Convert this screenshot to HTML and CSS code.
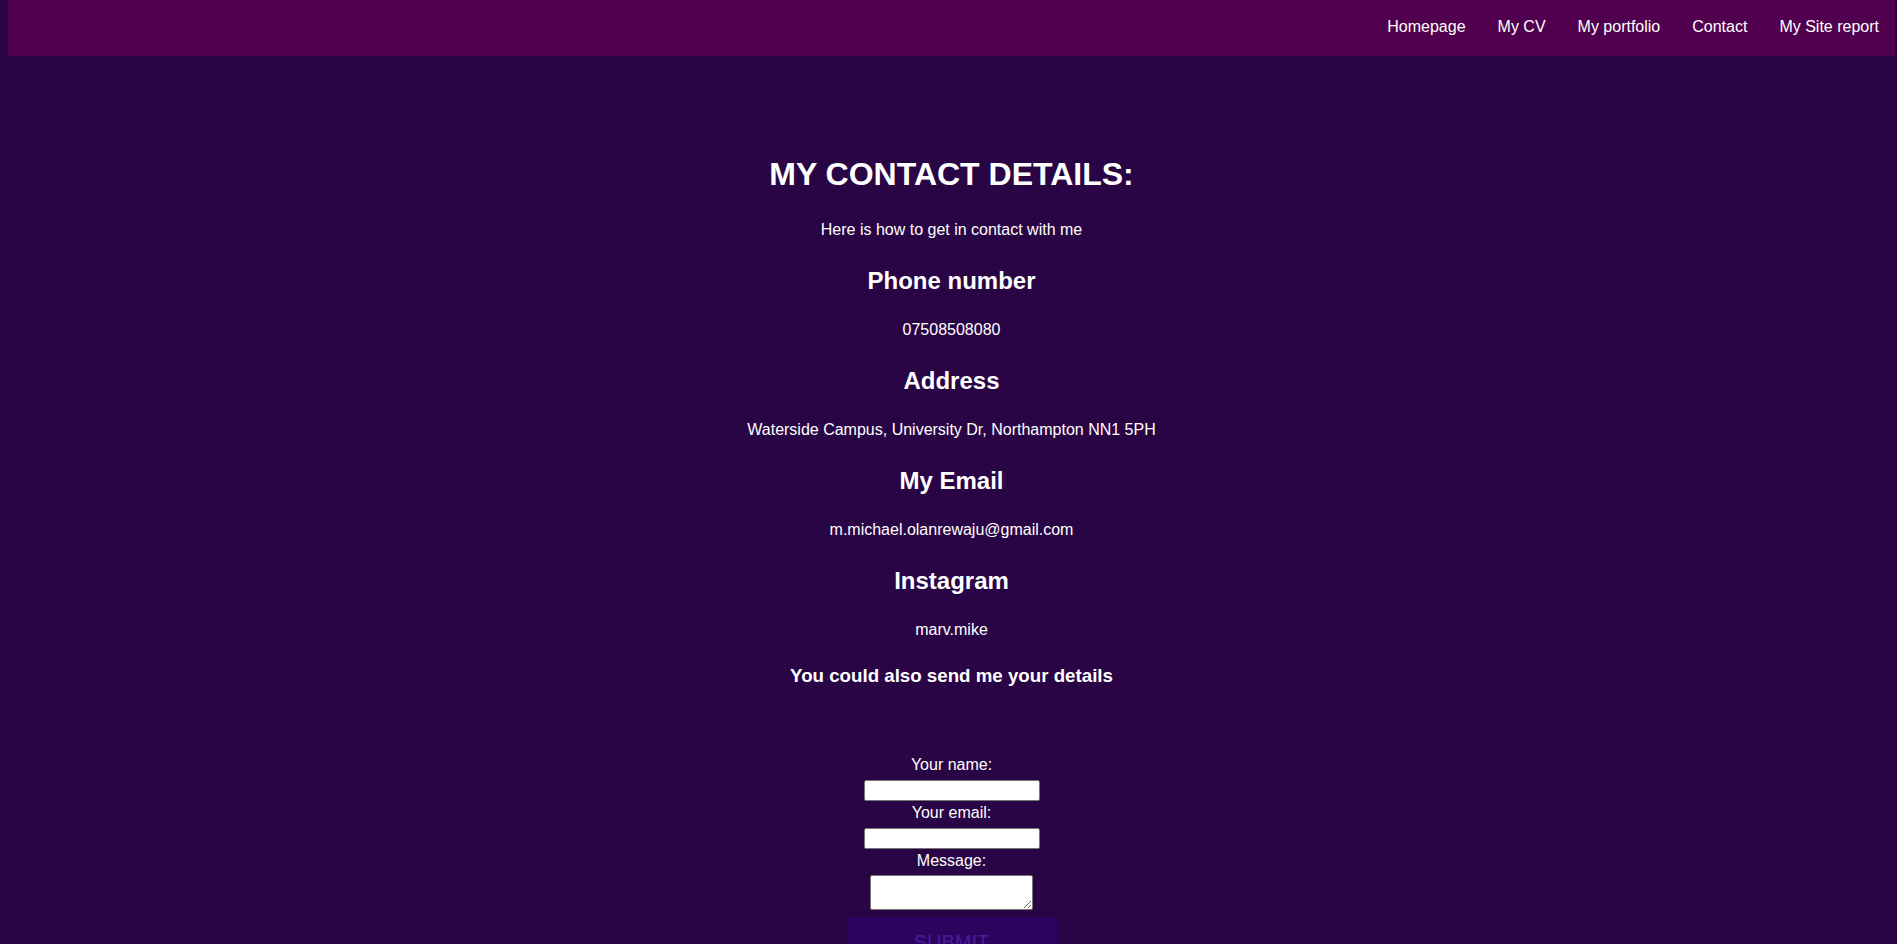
FILE: index.html
```html
<!DOCTYPE html>
<html lang="en">
<head>
<meta charset="utf-8">
<title>Contact</title>
<link rel="stylesheet" href="styles.css">
</head>
<body>
<nav class="topnav">
  <a href="#">Homepage</a>
  <a href="#">My CV</a>
  <a href="#">My portfolio</a>
  <a href="#">Contact</a>
  <a href="#">My Site report</a>
</nav>
<main class="contact">
  <h1 class="title">MY CONTACT DETAILS:</h1>
  <p class="intro">Here is how to get in contact with me</p>
  <h2 class="item-head">Phone number</h2>
  <p class="item-text">07508508080</p>
  <h2 class="item-head">Address</h2>
  <p class="item-text">Waterside Campus, University Dr, Northampton NN1 5PH</p>
  <h2 class="item-head">My Email</h2>
  <p class="item-text">m.michael.olanrewaju@gmail.com</p>
  <h2 class="item-head">Instagram</h2>
  <p class="item-text">marv.mike</p>
  <h3 class="send-head">You could also send me your details</h3>
  <form class="contact-form">
    <label class="field-label" for="name">Your name:</label>
    <input class="field-input" type="text" id="name">
    <label class="field-label" for="email">Your email:</label>
    <input class="field-input" type="text" id="email">
    <label class="field-label" for="msg">Message:</label>
    <textarea class="field-area" id="msg"></textarea>
    <button class="submit-btn" type="submit">SUBMIT</button>
  </form>
</main>
</body>
</html>
```

FILE: styles.css
```css
html {
  background: #2a0545;
}
body {
  margin: 0 2px 0 8px;
  background: #2a0545;
  font-family: "Liberation Sans", Arial, sans-serif;
  color: #ffffff;
}
.topnav {
  display: flex;
  justify-content: flex-end;
  align-items: center;
  height: 56px;
  box-sizing: border-box;
  padding: 0 0 2px 0;
  background: #51004f;
}
.topnav a {
  color: #ffffff;
  text-decoration: none;
  font-size: 16px;
  padding: 0 16px;
}
.contact {
  display: flex;
  flex-direction: column;
  align-items: center;
  text-align: center;
  padding-top: 100px;
  padding-bottom: 40px;
}
.title {
  margin: 0;
  font-size: 32px;
  font-weight: bold;
}
.intro {
  margin: 28.4px 0 0;
  font-size: 16px;
}
.item-head {
  margin: 28px 0 0;
  font-size: 24px;
  font-weight: bold;
}
.item-text {
  margin: 26px 0 0;
  font-size: 16px;
}
.send-head {
  margin: 26px 0 0;
  font-size: 18.72px;
  font-weight: bold;
}
.contact-form {
  display: flex;
  flex-direction: column;
  align-items: center;
  margin-top: 69px;
}
.field-label {
  font-size: 16px;
  line-height: 18.4px;
}
.field-input {
  box-sizing: border-box;
  width: 176px;
  height: 21px;
  margin: 5.3px 0 3px;
  border: 1px solid #767676;
  border-radius: 2px;
  background: #ffffff;
  padding: 1px 2px;
  font-size: 13.33px;
}
.field-area {
  box-sizing: border-box;
  width: 163px;
  height: 35px;
  margin: 4.4px 0 0;
  border: 1px solid #767676;
  border-radius: 2px;
  background: #ffffff;
  padding: 2px;
  font-size: 13.33px;
}
.submit-btn {
  width: 210px;
  height: 50px;
  margin-top: 7.7px;
  padding: 14px 0 0;
  border: none;
  background: #2b0460;
  color: #4c1a98;
  font-family: "Liberation Sans", Arial, sans-serif;
  font-size: 20px;
  line-height: 23px;
  display: flex;
  justify-content: center;
  align-items: flex-start;
}
```
